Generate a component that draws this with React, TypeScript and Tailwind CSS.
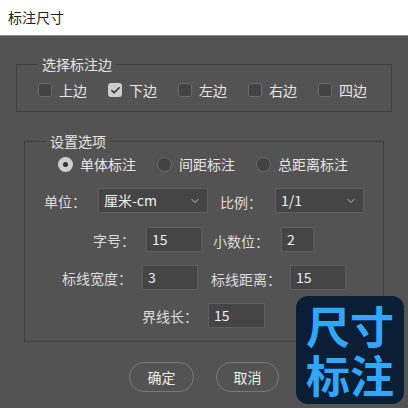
import { Check, ChevronDown } from 'lucide-react';

import type { ReactElement } from 'react';

const font = { fontFamily: '"Noto Sans CJK SC", "Noto Sans", sans-serif' };

function CheckItem({ label, checked }: { label: string; checked?: boolean }): ReactElement {
    return (
        <div className="flex w-[49px] items-center gap-[7px]">
            {checked ? (
                <span className="flex h-[14px] w-[14px] items-center justify-center rounded-[3px] bg-[#cdcdcd]">
                    <Check size={11} strokeWidth={3.5} className="text-[#333]" />
                </span>
            ) : (
                <span className="h-[14px] w-[14px] rounded-[3px] border border-[#6b6b6b] bg-[#434343]" />
            )}
            <span className="text-[14px] leading-[20px] text-[#e6e6e6]">{label}</span>
        </div>
    );
}

function RadioItem({ label, checked }: { label: string; checked?: boolean }): ReactElement {
    return (
        <div className="flex items-center gap-[7px]">
            {checked ? (
                <span className="flex h-[15px] w-[15px] items-center justify-center rounded-full bg-[#cfcfcf]">
                    <span className="h-[5px] w-[5px] rounded-full bg-[#333]" />
                </span>
            ) : (
                <span className="h-[15px] w-[15px] rounded-full border border-[#6b6b6b] bg-[#434343]" />
            )}
            <span className="text-[14px] leading-[20px] text-[#e6e6e6]">{label}</span>
        </div>
    );
}

function Label({ text }: { text: string }): ReactElement {
    return <span className="whitespace-nowrap text-[14px] leading-[20px] text-[#dcdcdc]">{text}</span>;
}

function Field({ value, width }: { value: string; width: string }): ReactElement {
    return (
        <div className={`flex h-[25px] items-center border border-[#5e5e5e] bg-[#454545] pl-[5px] ${width}`}>
            <span className="text-[14px] text-[#f0f0f0]">{value}</span>
        </div>
    );
}

function Select({ value, width }: { value: string; width: string }): ReactElement {
    return (
        <div className={`flex h-[25px] items-center justify-between border border-[#5e5e5e] bg-[#454545] pl-[5px] pr-[6px] ${width}`}>
            <span className="text-[14px] text-[#f0f0f0]">{value}</span>
            <ChevronDown size={12} strokeWidth={2} className="text-[#bdbdbd]" />
        </div>
    );
}

export default function App(): ReactElement {
    return (
        <div className="relative h-[408px] w-[408px] overflow-hidden bg-[#535353]" style={font}>
            <div className="flex h-[36px] items-center border-b border-[#8a8a8a] bg-white pl-[8px]">
                <span className="text-[14px] text-[#222]">标注尺寸</span>
            </div>

            <fieldset className="ml-[16px] mt-[18px] w-[376px] border border-[#3f3f3f] pb-[11px] pt-[6px]">
                <legend className="ml-[21px] px-[4px] text-[14px] leading-[20px] text-[#e6e6e6]">选择标注边</legend>
                <div className="flex h-[20px] items-center gap-[21px] pl-[21px]">
                    <CheckItem label="上边" />
                    <CheckItem label="下边" checked />
                    <CheckItem label="左边" />
                    <CheckItem label="右边" />
                    <CheckItem label="四边" />
                </div>
            </fieldset>

            <fieldset className="ml-[24px] mt-[19px] w-[360px] border border-[#3f3f3f] pb-[13px] pt-[3px]">
                <legend className="ml-[21px] px-[4px] text-[14px] leading-[20px] text-[#e6e6e6]">设置选项</legend>
                <div className="flex h-[20px] items-center gap-[21px] pl-[33px]">
                    <RadioItem label="单体标注" checked />
                    <RadioItem label="间距标注" />
                    <RadioItem label="总距离标注" />
                </div>

                <div className="mt-[14px] flex items-center pl-[19px]">
                    <Label text="单位：" />
                    <div className="ml-[12px]">
                        <Select value="厘米-cm" width="w-[110px]" />
                    </div>
                    <div className="ml-[12px]">
                        <Label text="比例：" />
                    </div>
                    <div className="ml-[13px]">
                        <Select value="1/1" width="w-[89px]" />
                    </div>
                </div>

                <div className="mt-[14px] flex items-center pl-[68px]">
                    <Label text="字号：" />
                    <div className="ml-[11px]">
                        <Field value="15" width="w-[56px]" />
                    </div>
                    <div className="ml-[11px]">
                        <Label text="小数位：" />
                    </div>
                    <div className="ml-[12px]">
                        <Field value="2" width="w-[33px]" />
                    </div>
                </div>

                <div className="mt-[13px] flex items-center pl-[37px]">
                    <Label text="标线宽度：" />
                    <div className="ml-[10px]">
                        <Field value="3" width="w-[56px]" />
                    </div>
                    <div className="ml-[13px]">
                        <Label text="标线距离：" />
                    </div>
                    <div className="ml-[9px]">
                        <Field value="15" width="w-[56px]" />
                    </div>
                </div>

                <div className="mt-[13px] flex items-center pl-[117px]">
                    <Label text="界线长：" />
                    <div className="ml-[10px]">
                        <Field value="15" width="w-[57px]" />
                    </div>
                </div>
            </fieldset>

            <div className="mt-[20px] flex justify-center gap-[22px]">
                <button className="h-[30px] w-[65px] rounded-full border-[1.5px] border-[#7a7a7a] text-[14px] text-[#eeeeee]">
                    确定
                </button>
                <button className="h-[30px] w-[63px] rounded-full border-[1.5px] border-[#7a7a7a] text-[14px] text-[#eeeeee]">
                    取消
                </button>
            </div>

            <div className="absolute left-[296px] top-[296px] flex h-[108px] w-[108px] items-center justify-center rounded-[12px] bg-[#0a1e35]">
                <div className="text-center text-[44px] font-bold leading-[49px] text-[#31a8ff]">
                    尺寸
                    <br />
                    标注
                </div>
            </div>
        </div>
    );
}
